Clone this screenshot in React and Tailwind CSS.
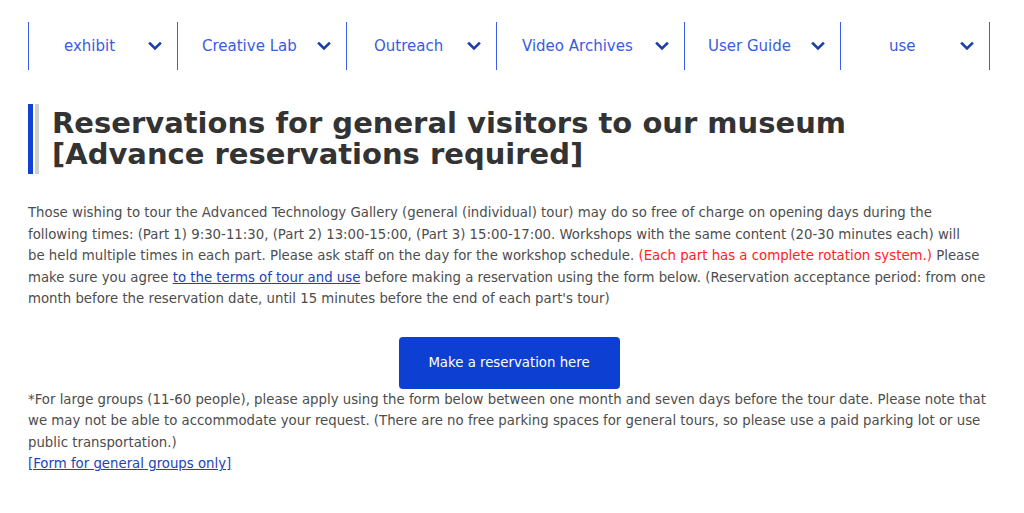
import React from "react";

const navItems = [
  { label: "exhibit", w: "w-[149px]", pl: "pl-[35px]" },
  { label: "Creative Lab", w: "w-[169px]", pl: "pl-[24px]" },
  { label: "Outreach", w: "w-[150px]", pl: "pl-[27px]" },
  { label: "Video Archives", w: "w-[188px]", pl: "pl-[25px]" },
  { label: "User Guide", w: "w-[156px]", pl: "pl-[23px]" },
  { label: "use", w: "w-[149px]", pl: "pl-[48px]" },
];

function Chevron() {
  return (
    <svg width="14" height="10" viewBox="0 0 14 10" fill="none">
      <path d="M2 2.5 L7 7.5 L12 2.5" stroke="#1d3fae" strokeWidth="2.6" strokeLinecap="square" />
    </svg>
  );
}

export default function App() {
  return (
    <div className="w-[1024px] h-[513px] bg-white overflow-hidden font-['DejaVu_Sans',sans-serif]">
      <div className="w-[962px] ml-[28px] pt-[22px]">
        <nav className="flex h-[48px] border-r border-[#3c5fe6]">
          {navItems.map((it) => (
            <div
              key={it.label}
              className={`${it.w} ${it.pl} flex items-center justify-between pr-[15px] border-l border-[#3c5fe6]`}
            >
              <span className="text-[15px] text-[#3a5ce0]">{it.label}</span>
              <Chevron />
            </div>
          ))}
        </nav>

        <div className="mt-[34px] flex">
          <div className="flex gap-[2px] shrink-0">
            <div className="w-[5px] bg-[#1040d4]" />
            <div className="w-[4px] bg-[#cfcfcf]" />
          </div>
          <h1 className="pl-[13px] text-[29px] leading-[31px] font-bold text-[#333333] py-[4px]">
            Reservations for general visitors to our museum
            <br />
            [Advance reservations required]
          </h1>
        </div>

        <p className="mt-[28px] text-[13.3px] leading-[21.5px] text-[#4d4d4d] whitespace-nowrap">
          Those wishing to tour the Advanced Technology Gallery (general (individual) tour) may do so free of charge on opening days during the
          <br />
          following times: (Part 1) 9:30-11:30, (Part 2) 13:00-15:00, (Part 3) 15:00-17:00. Workshops with the same content (20-30 minutes each) will
          <br />
          be held multiple times in each part. Please ask staff on the day for the workshop schedule.{" "}
          <span className="text-[#ff2222]">(Each part has a complete rotation system.)</span> Please
          <br />
          make sure you agree{" "}
          <a href="#" className="text-[#1a44b8] underline">to the terms of tour and use</a> before making a reservation using the form below. (Reservation acceptance period: from one
          <br />
          month before the reservation date, until 15 minutes before the end of each part's tour)
        </p>

        <div className="flex justify-center mt-[27px]">
          <button className="w-[221px] h-[52px] rounded-[4px] bg-[#0d3fd3] text-white text-[13.3px]">
            Make a reservation here
          </button>
        </div>

        <p className="text-[13.3px] leading-[21.5px] text-[#4d4d4d]">
          *For large groups (11-60 people), please apply using the form below between one month and seven days before the tour date. Please note that we may not be able to accommodate your request. (There are no free parking spaces for general tours, so please use a paid parking lot or use public transportation.)
          <br />
          <a href="#" className="text-[#1a44b8] underline">[Form for general groups only]</a>
        </p>
      </div>
    </div>
  );
}
